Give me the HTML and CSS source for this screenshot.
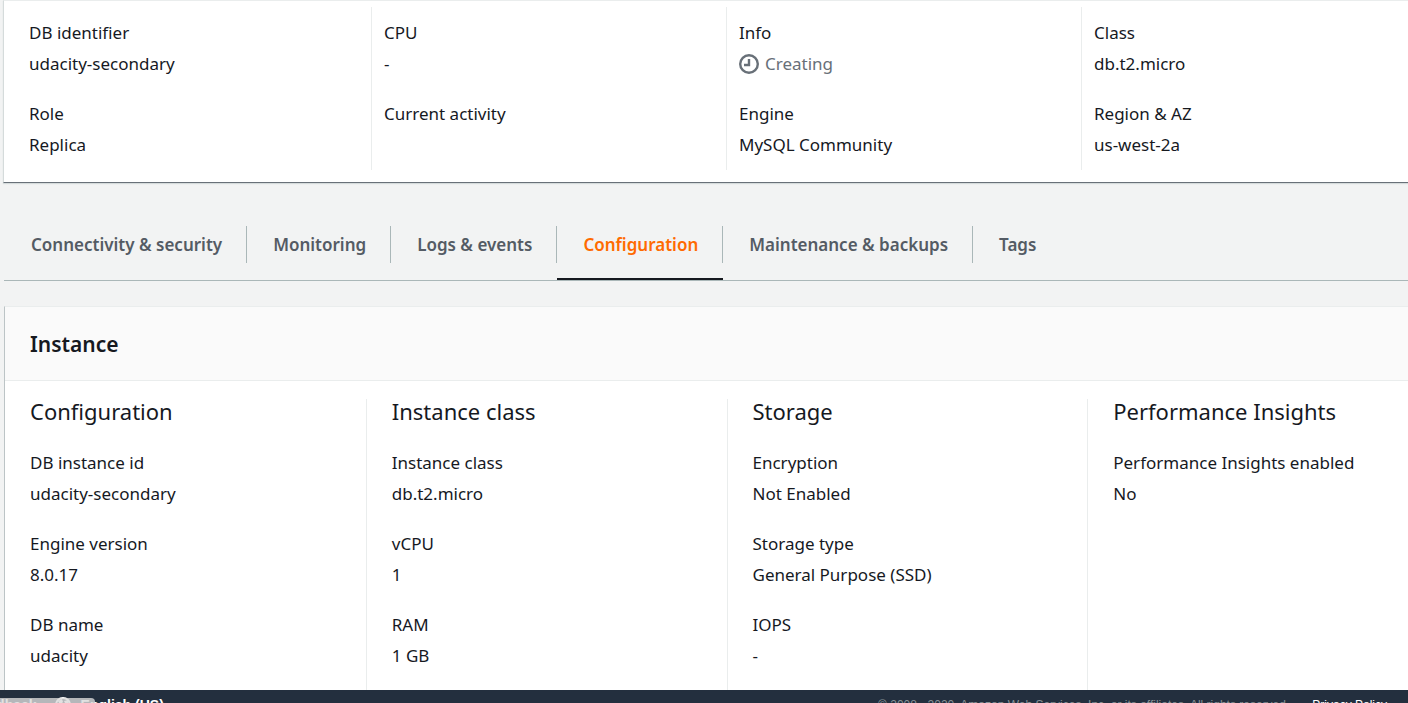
FILE: index.html
```
<!DOCTYPE html>
<html lang="en">
<head>
<meta charset="utf-8">
<title>udacity-secondary</title>
<link rel="stylesheet" href="styles.css">
</head>
<body>
<main class="page">
  <div class="content">
    <section class="summary">
      <dl class="summary-col">
        <div class="field"><dt>DB identifier</dt><dd>udacity-secondary</dd></div>
        <div class="field"><dt>Role</dt><dd>Replica</dd></div>
      </dl>
      <dl class="summary-col">
        <div class="field"><dt>CPU</dt><dd>-</dd></div>
        <div class="field"><dt>Current activity</dt><dd></dd></div>
      </dl>
      <dl class="summary-col">
        <div class="field"><dt>Info</dt><dd class="status"><svg class="clock" viewBox="0 0 20 20" aria-hidden="true"><circle cx="10" cy="10" r="8.8"/><path d="M10 5v6H5"/></svg>Creating</dd></div>
        <div class="field"><dt>Engine</dt><dd>MySQL Community</dd></div>
      </dl>
      <dl class="summary-col">
        <div class="field"><dt>Class</dt><dd>db.t2.micro</dd></div>
        <div class="field"><dt>Region &amp; AZ</dt><dd>us-west-2a</dd></div>
      </dl>
    </section>

    <nav class="tabs">
      <button class="tab" type="button"><span>Connectivity &amp; security</span></button>
      <button class="tab" type="button"><span>Monitoring</span></button>
      <button class="tab" type="button"><span>Logs &amp; events</span></button>
      <button class="tab active" type="button"><span>Configuration</span></button>
      <button class="tab" type="button"><span>Maintenance &amp; backups</span></button>
      <button class="tab" type="button"><span>Tags</span></button>
    </nav>

    <section class="instance">
      <h2 class="instance-title">Instance</h2>
      <div class="instance-grid">
        <div class="instance-col">
          <h3>Configuration</h3>
          <dl>
            <div class="field"><dt>DB instance id</dt><dd>udacity-secondary</dd></div>
            <div class="field"><dt>Engine version</dt><dd>8.0.17</dd></div>
            <div class="field"><dt>DB name</dt><dd>udacity</dd></div>
          </dl>
        </div>
        <div class="instance-col">
          <h3>Instance class</h3>
          <dl>
            <div class="field"><dt>Instance class</dt><dd>db.t2.micro</dd></div>
            <div class="field"><dt>vCPU</dt><dd>1</dd></div>
            <div class="field"><dt>RAM</dt><dd>1 GB</dd></div>
          </dl>
        </div>
        <div class="instance-col">
          <h3>Storage</h3>
          <dl>
            <div class="field"><dt>Encryption</dt><dd>Not Enabled</dd></div>
            <div class="field"><dt>Storage type</dt><dd>General Purpose (SSD)</dd></div>
            <div class="field"><dt>IOPS</dt><dd>-</dd></div>
          </dl>
        </div>
        <div class="instance-col">
          <h3>Performance Insights</h3>
          <dl>
            <div class="field"><dt>Performance Insights enabled</dt><dd>No</dd></div>
          </dl>
        </div>
      </div>
    </section>
  </div>
</main>
<footer class="footer">
  <div class="footer-left">
    <button class="footer-button feedback" type="button">Feedback</button>
    <button class="footer-button" type="button"><svg class="globe" viewBox="0 0 16 16" aria-hidden="true"><circle cx="8" cy="8" r="7"/><path d="M3 4l4-2 1 3-3 3zM9 4l4-1 1 4-3 1z"/></svg>English (US)</button>
  </div>
  <div class="footer-right">
    <span>© 2008 - 2020, Amazon Web Services, Inc. or its affiliates. All rights reserved.</span>
    <a href="#">Privacy Policy</a>
  </div>
  <div class="status-bubble"></div>
</footer>
</body>
</html>
```
FILE: styles.css
```
* { box-sizing: border-box; }

body {
  margin: 0;
  height: 100vh;
  overflow: hidden;
  display: flex;
  flex-direction: column;
  background: #f2f3f3;
  color: #16191f;
  font: 17px/25px "Noto Sans", sans-serif;
}

h2, h3, dl, dd { margin: 0; }

.page {
  flex: 1;
  min-height: 0;
  overflow: hidden;
}

/* The content runs past the right edge of the window. */
.content {
  width: calc(100% + 41px);
  padding-left: 3px;
}

.summary {
  display: grid;
  grid-template-columns: repeat(4, 1fr);
  padding: 6px 12px 12px;
  background: #fff;
  border: 1px solid #d5dbdb;
  border-top-color: #eaeded;
  border-bottom-color: #687078;
  box-shadow: 0 1px 1px #d5dbdb;
}

.summary-col {
  display: flex;
  flex-direction: column;
  gap: 25px;
  padding: 13px 12px;
  border-left: 1px solid #eaeded;
}

.summary-col:first-child { border-left-color: transparent; }

.field {
  display: grid;
  gap: 6px;
}

.field dd { min-height: 25px; }

.status {
  display: flex;
  align-items: center;
  gap: 6px;
  color: #687078;
}

.clock {
  width: 20px;
  height: 20px;
  fill: none;
  stroke: #687078;
  stroke-width: 2.4;
}

.tabs {
  display: flex;
  margin-left: 1px;
  padding: 43px 0 0 1px;
  border-bottom: 1px solid #aab7b8;
}

.tab {
  padding: 0 0 15px;
  border: 0;
  border-bottom: 2px solid transparent;
  background: none;
  color: #545b64;
  font: 600 17px/25px "Noto Sans", sans-serif;
}

.tab span {
  display: block;
  padding: 6px 24px 6px 26px;
  border-right: 1px solid #aab7b8;
}

.tab:last-child span { border-right: 0; }

.tab.active {
  border-bottom-color: #16191f;
  color: #ff6a00;
}

.instance {
  margin: 25px 0 0 1px;
  background: #fff;
  border: 1px solid #d5dbdb;
  border-left-color: #bcc4c6;
  border-top-color: #eaeded;
}

.instance-title {
  padding: 21px 25px 20px;
  border-bottom: 1px solid #eaeded;
  background: #fafafa;
  font-size: 21px;
  font-weight: 600;
  line-height: 32px;
}

.instance-grid {
  display: grid;
  grid-template-columns: repeat(4, 1fr);
  padding: 18px 0;
}

.instance-col {
  padding: 0 25px 40px;
  border-left: 1px solid #eaeded;
}

.instance-col:first-child { border-left: 0; }

.instance-col h3 {
  margin-bottom: 26px;
  font-size: 22px;
  font-weight: 400;
  line-height: 25px;
}

.instance-col dl {
  display: grid;
  gap: 25px;
}

.footer {
  position: relative;
  flex: none;
  display: flex;
  justify-content: space-between;
  height: 13px;
  padding: 7px 21px 0 0;
  overflow: hidden;
  background: #232f3e;
  color: #879196;
  font: 12px/16px "Liberation Sans", Arial, sans-serif;
}

.footer-left {
  display: flex;
  gap: 18px;
  margin-left: -28px;
}

.footer-button {
  display: flex;
  align-items: center;
  gap: 10px;
  height: 16px;
  padding: 0;
  border: 0;
  background: none;
  color: #fff;
  font: bold 14px/16px "Liberation Sans", Arial, sans-serif;
}

.globe {
  width: 16px;
  height: 16px;
  fill: none;
  stroke: #fff;
  stroke-width: 2;
}

.globe path {
  fill: #fff;
  stroke: none;
}

.footer-right {
  display: flex;
  gap: 23px;
}

.footer-right a {
  color: #fff;
  text-decoration: none;
}

.status-bubble {
  position: absolute;
  left: 0;
  top: 8px;
  width: 95px;
  height: 20px;
  border-radius: 0 4px 0 0;
  background: rgba(218, 218, 218, 0.8);
}
```
